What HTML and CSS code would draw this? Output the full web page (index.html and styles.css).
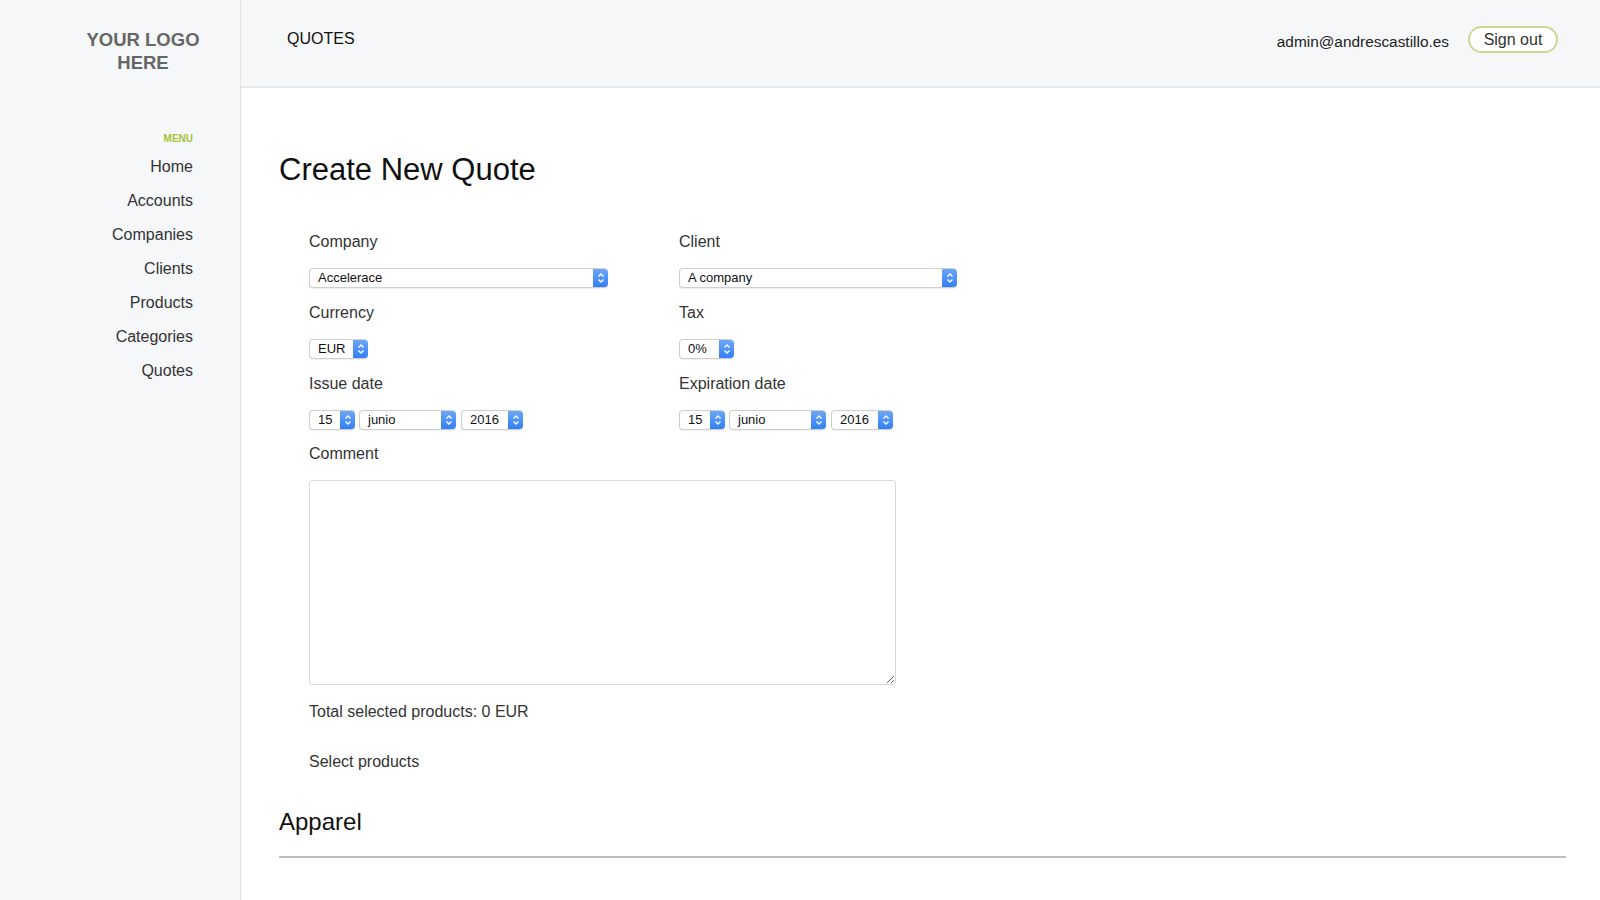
FILE: index.html
```html
<!DOCTYPE html>
<html lang="en">
<head>
<meta charset="utf-8">
<title>Quotes</title>
<link rel="stylesheet" href="styles.css">
</head>
<body>
<div class="app">
  <aside class="sidebar">
    <div class="logo">YOUR LOGO<br>HERE</div>
    <nav class="menu">
      <div class="menu-title">MENU</div>
      <a href="#">Home</a>
      <a href="#">Accounts</a>
      <a href="#">Companies</a>
      <a href="#">Clients</a>
      <a href="#">Products</a>
      <a href="#">Categories</a>
      <a href="#">Quotes</a>
    </nav>
  </aside>
  <div class="main">
    <header class="topbar">
      <div class="section-name">QUOTES</div>
      <div class="user">
        <span class="email">admin@andrescastillo.es</span>
        <button class="signout">Sign out</button>
      </div>
    </header>
    <section class="content">
      <h1 class="title">Create New Quote</h1>
      <form class="form">
        <div class="grid">
          <div class="field">
            <label>Company</label>
            <div class="select w-company"><span class="val">Accelerace</span><span class="stepper"><svg viewBox="0 0 10 14" width="10" height="14"><path d="M2.5 5.5 L5 3 L7.5 5.5 M2.5 8.5 L5 11 L7.5 8.5" fill="none" stroke="#fff" stroke-width="1.4"/></svg></span></div>
          </div>
          <div class="field">
            <label>Client</label>
            <div class="select w-client"><span class="val">A company</span><span class="stepper"><svg viewBox="0 0 10 14" width="10" height="14"><path d="M2.5 5.5 L5 3 L7.5 5.5 M2.5 8.5 L5 11 L7.5 8.5" fill="none" stroke="#fff" stroke-width="1.4"/></svg></span></div>
          </div>
          <div class="field">
            <label>Currency</label>
            <div class="select w-cur"><span class="val">EUR</span><span class="stepper"><svg viewBox="0 0 10 14" width="10" height="14"><path d="M2.5 5.5 L5 3 L7.5 5.5 M2.5 8.5 L5 11 L7.5 8.5" fill="none" stroke="#fff" stroke-width="1.4"/></svg></span></div>
          </div>
          <div class="field">
            <label>Tax</label>
            <div class="select w-tax"><span class="val">0%</span><span class="stepper"><svg viewBox="0 0 10 14" width="10" height="14"><path d="M2.5 5.5 L5 3 L7.5 5.5 M2.5 8.5 L5 11 L7.5 8.5" fill="none" stroke="#fff" stroke-width="1.4"/></svg></span></div>
          </div>
          <div class="field">
            <label>Issue date</label>
            <div class="date-row">
              <div class="select w-day"><span class="val">15</span><span class="stepper"><svg viewBox="0 0 10 14" width="10" height="14"><path d="M2.5 5.5 L5 3 L7.5 5.5 M2.5 8.5 L5 11 L7.5 8.5" fill="none" stroke="#fff" stroke-width="1.4"/></svg></span></div>
              <div class="select w-month"><span class="val">junio</span><span class="stepper"><svg viewBox="0 0 10 14" width="10" height="14"><path d="M2.5 5.5 L5 3 L7.5 5.5 M2.5 8.5 L5 11 L7.5 8.5" fill="none" stroke="#fff" stroke-width="1.4"/></svg></span></div>
              <div class="select w-year"><span class="val">2016</span><span class="stepper"><svg viewBox="0 0 10 14" width="10" height="14"><path d="M2.5 5.5 L5 3 L7.5 5.5 M2.5 8.5 L5 11 L7.5 8.5" fill="none" stroke="#fff" stroke-width="1.4"/></svg></span></div>
            </div>
          </div>
          <div class="field">
            <label>Expiration date</label>
            <div class="date-row">
              <div class="select w-day"><span class="val">15</span><span class="stepper"><svg viewBox="0 0 10 14" width="10" height="14"><path d="M2.5 5.5 L5 3 L7.5 5.5 M2.5 8.5 L5 11 L7.5 8.5" fill="none" stroke="#fff" stroke-width="1.4"/></svg></span></div>
              <div class="select w-month"><span class="val">junio</span><span class="stepper"><svg viewBox="0 0 10 14" width="10" height="14"><path d="M2.5 5.5 L5 3 L7.5 5.5 M2.5 8.5 L5 11 L7.5 8.5" fill="none" stroke="#fff" stroke-width="1.4"/></svg></span></div>
              <div class="select w-year"><span class="val">2016</span><span class="stepper"><svg viewBox="0 0 10 14" width="10" height="14"><path d="M2.5 5.5 L5 3 L7.5 5.5 M2.5 8.5 L5 11 L7.5 8.5" fill="none" stroke="#fff" stroke-width="1.4"/></svg></span></div>
            </div>
          </div>
        </div>
        <div class="field comment">
          <label>Comment</label>
          <textarea class="textarea"></textarea>
        </div>
        <p class="total">Total selected products: 0 EUR</p>
        <p class="select-products">Select products</p>
      </form>
      <h2 class="category">Apparel</h2>
      <hr class="rule">
    </section>
  </div>
</div>
</body>
</html>
```
FILE: styles.css
```css
* { box-sizing: border-box; }
html, body { margin: 0; padding: 0; height: 100%; }
body {
  font-family: "Liberation Sans", Arial, sans-serif;
  color: #333;
  background: #fff;
  overflow: hidden;
}
.app { display: flex; height: 900px; }
.sidebar {
  width: 241px;
  flex: none;
  background: #f6f7f9;
  border-right: 1px solid #e1e2e5;
}
.logo {
  padding: 29px 0 0 46px;
  text-align: center;
  font-weight: bold;
  font-size: 18.5px;
  line-height: 22.5px;
  color: #666;
}
.menu {
  display: flex;
  flex-direction: column;
  align-items: flex-end;
  padding: 59px 47px 0 0;
}
.menu-title {
  font-size: 10px;
  font-weight: bold;
  color: #a3c43a;
  line-height: 12px;
  margin-bottom: 12px;
}
.menu a {
  font-size: 16px;
  line-height: 20px;
  color: #333;
  text-decoration: none;
  margin-bottom: 14px;
}
.main { flex: 1; display: flex; flex-direction: column; }
.topbar {
  height: 88px;
  flex: none;
  background: #f6f7f9;
  border-bottom: 2px solid #e6e7e9;
  display: flex;
  justify-content: space-between;
  align-items: flex-start;
  padding: 0 42px 0 46px;
}
.section-name {
  font-size: 16px;
  line-height: 20px;
  color: #111;
  margin-top: 29px;
}
.user { display: flex; align-items: center; margin-top: 26px; }
.email { font-size: 15.4px; color: #222; margin-right: 19px; margin-top: 4px; }
.signout {
  width: 90px;
  height: 27px;
  border: 2px solid #c6da93;
  border-radius: 14px;
  background: #fff;
  font-family: inherit;
  font-size: 16px;
  color: #333;
  padding: 0;
}
.content { padding: 63px 34px 0 38px; }
.title {
  margin: 0;
  font-size: 31px;
  line-height: 38px;
  font-weight: normal;
  color: #111;
}
.form { padding: 43px 0 0 30px; }
.grid {
  display: grid;
  grid-template-columns: 370px 370px;
  row-gap: 15px;
}
.field label {
  display: block;
  font-size: 16px;
  line-height: 20px;
  color: #333;
  margin-bottom: 16px;
}
.select {
  display: flex;
  height: 20px;
  border: 1px solid #cfcfcf;
  border-right: none;
  border-radius: 4px;
  background: #fff;
  box-shadow: 0 1px 1px rgba(0,0,0,0.06);
  overflow: hidden;
}
.val {
  flex: 1;
  font-size: 13px;
  line-height: 18px;
  padding-left: 8px;
  color: #111;
  white-space: nowrap;
}
.stepper {
  width: 15px;
  flex: none;
  display: flex;
  align-items: center;
  justify-content: center;
  background: linear-gradient(#6ea9f9, #2f7df4);
  border-radius: 0 4px 4px 0;
  margin-top: -1px;
  margin-bottom: -1px;
}
.w-company { width: 299px; }
.w-client { width: 278px; }
.w-cur { width: 59px; }
.w-tax { width: 55px; }
.w-day { width: 46px; }
.w-month { width: 97px; }
.w-year { width: 62px; }
.date-row { display: flex; gap: 4px; }
.date-row .w-month { margin-right: 1px; }
.comment { margin-top: 14px; }
.comment label { margin-bottom: 16px; }
.textarea {
  display: block;
  width: 587px;
  height: 205px;
  border: 1px solid #dadada;
  border-radius: 3px;
  resize: both;
  font-family: inherit;
}
.total {
  margin: 17px 0 0;
  font-size: 16px;
  line-height: 20px;
  color: #333;
}
.select-products {
  margin: 30px 0 0;
  font-size: 16px;
  line-height: 20px;
  color: #333;
}
.category {
  margin: 36px 0 0;
  font-size: 24px;
  line-height: 28px;
  font-weight: normal;
  color: #111;
}
.rule {
  margin: 20px 0 0;
  border: none;
  border-top: 2px solid #bdbdbd;
  height: 0;
}
```
